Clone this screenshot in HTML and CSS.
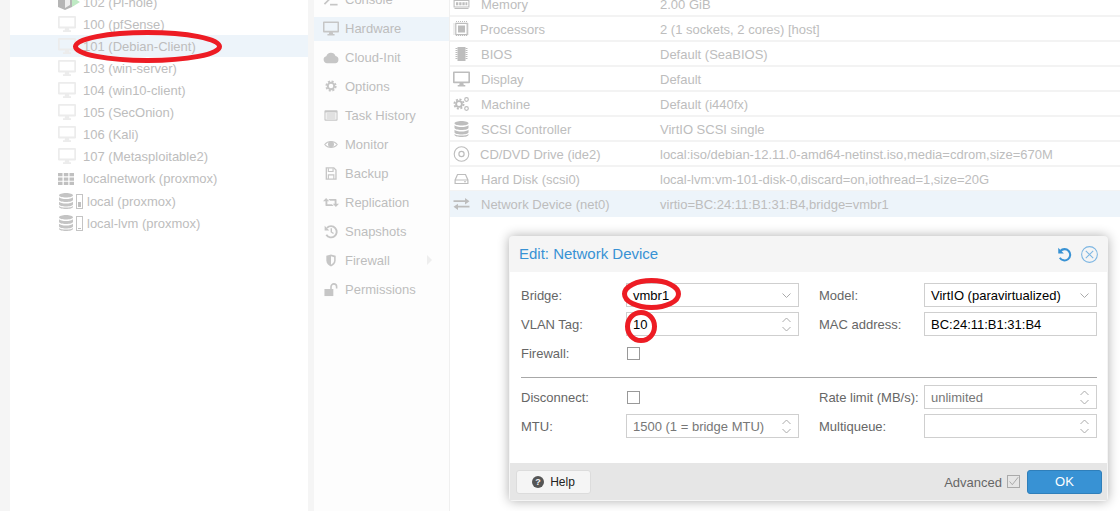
FILE: index.html
```html
<!DOCTYPE html>
<html lang="en">
<head>
<meta charset="utf-8">
<title>Edit: Network Device</title>
<link rel="stylesheet" href="styles.css">
</head>
<body>
<svg class="defs" width="0" height="0" aria-hidden="true">
  <symbol id="i-desktop" viewBox="0 0 18 16"><path fill="currentColor" fill-rule="evenodd" d="M1 0h16a1 1 0 0 1 1 1v10.500a1 1 0 0 1-1 1h-6l.4 1.800H13V16H5v-1.700h1.600l.4-1.800H1a1 1 0 0 1-1-1V1a1 1 0 0 1 1-1zM1.700 1.700v8.900h14.600V1.700z"/></symbol>
  <symbol id="i-db" viewBox="0 0 14 16"><path fill="currentColor" d="M7 0c3.800 0 7 1 7 2.300S10.800 4.600 7 4.600 0 3.600 0 2.300 3.200 0 7 0zM0 4.300c1 1.200 3.800 1.800 7 1.800s6-.6 7-1.800v2.400c0 1.300-3.200 2.300-7 2.300S0 8 0 6.700zM0 8.800c1 1.200 3.800 1.800 7 1.800s6-.6 7-1.800v2.400c0 1.300-3.200 2.300-7 2.300s-7-1-7-2.300zM0 13c1 1.100 3.800 1.600 7 1.600S13 14.100 14 13v.7c0 1.300-3.200 2.300-7 2.300s-7-1-7-2.300z"/></symbol>
  <symbol id="i-gear" viewBox="0 0 16 16"><circle cx="8" cy="8" r="4.300" fill="none" stroke="currentColor" stroke-width="2.600"/><circle cx="8" cy="8" r="6.300" fill="none" stroke="currentColor" stroke-width="2.400" stroke-dasharray="2.800 2.150"/></symbol>
  <symbol id="i-chev" viewBox="0 0 9 5"><path d="M.5 .5l4 4 4-4" fill="none" stroke="currentColor" stroke-width="1"/></symbol>
  <symbol id="i-spin" viewBox="0 0 9 15"><path d="M.5 5l4-4 4 4M.5 10l4 4 4-4" fill="none" stroke="currentColor" stroke-width="1"/></symbol>
</svg>

<div class="page">
  <nav class="tree">
    <div class="node"><svg class="ico-guest" viewBox="0 0 22 16"><path fill="#b5b5b5" d="M0 3l6-3 8 2v11l-7 3-7-3z"/><path fill="#eee" d="M7 5l5-2v8l-5 3z"/><path fill="#bfeac4" d="M14 3l8 5-8 5z"/></svg><span>102 (Pi-hole)</span></div>
    <div class="node"><svg class="ico-vm"><use href="#i-desktop"/></svg><span>100 (pfSense)</span></div>
    <div class="node is-sel"><svg class="ico-vm"><use href="#i-desktop"/></svg><span>101 (Debian-Client)</span></div>
    <div class="node"><svg class="ico-vm"><use href="#i-desktop"/></svg><span>103 (win-server)</span></div>
    <div class="node"><svg class="ico-vm"><use href="#i-desktop"/></svg><span>104 (win10-client)</span></div>
    <div class="node"><svg class="ico-vm"><use href="#i-desktop"/></svg><span>105 (SecOnion)</span></div>
    <div class="node"><svg class="ico-vm"><use href="#i-desktop"/></svg><span>106 (Kali)</span></div>
    <div class="node"><svg class="ico-vm"><use href="#i-desktop"/></svg><span>107 (Metasploitable2)</span></div>
    <div class="node node-tall"><svg class="ico-net" viewBox="0 0 16 12"><path fill="#c0c0c0" d="M0 0h4.500v3.300H0zM5.800 0h4.500v3.300H5.800zM11.500 0H16v3.300h-4.500zM0 4.400h4.500v3.300H0zM5.800 4.400h4.500v3.300H5.800zM11.500 4.400H16v3.300h-4.500zM0 8.700h4.500V12H0zM5.800 8.700h4.500V12H5.800zM11.500 8.700H16V12h-4.500z"/></svg><span>localnetwork (proxmox)</span></div>
    <div class="node node-store"><svg class="ico-db"><use href="#i-db"/></svg><span class="usage"><span class="usage-fill"></span></span><span>local (proxmox)</span></div>
    <div class="node node-store"><svg class="ico-db"><use href="#i-db"/></svg><span class="usage"><span class="usage-fill usage-low"></span></span><span>local-lvm (proxmox)</span></div>
  </nav>

  <nav class="menu">
    <div class="item"><svg class="ico-menu" viewBox="0 0 16 16"><path d="M1 2l5.500 5.500L1 13" fill="none" stroke="currentColor" stroke-width="1.800"/><path d="M7 13.500h8" stroke="currentColor" stroke-width="1.800"/></svg><span>Console</span></div>
    <div class="item is-sel"><svg class="ico-menu"><use href="#i-desktop"/></svg><span>Hardware</span></div>
    <div class="item"><svg class="ico-menu" viewBox="0 0 16 16"><path fill="currentColor" d="M3.800 14a3.700 3.700 0 0 1-.8-7.300A5.200 5.200 0 0 1 12.800 6.300 3.900 3.900 0 0 1 12.500 14z"/></svg><span>Cloud-Init</span></div>
    <div class="item"><svg class="ico-gear"><use href="#i-gear"/></svg><span>Options</span></div>
    <div class="item"><svg class="ico-menu" viewBox="0 0 16 16"><path fill="currentColor" fill-rule="evenodd" d="M2 2.500h12a1 1 0 0 1 1 1v9a1 1 0 0 1-1 1H2a1 1 0 0 1-1-1v-9a1 1 0 0 1 1-1zM2.200 4.800v7.500h11.600V4.800z"/><path fill="currentColor" d="M3.200 5.900h9.600V7H3.200zM3.200 8h9.600v1.100H3.200zM3.200 10h9.600v1.100H3.200z"/></svg><span>Task History</span></div>
    <div class="item"><svg class="ico-menu" viewBox="0 0 16 16"><path fill="none" stroke="currentColor" stroke-width="1.100" d="M1.300 8C4.700 3.600 11.300 3.600 14.700 8 11.300 12.400 4.700 12.400 1.300 8z"/><circle cx="8" cy="7.700" r="3.200" fill="currentColor"/></svg><span>Monitor</span></div>
    <div class="item"><svg class="ico-menu" viewBox="0 0 16 16"><path fill="none" stroke="currentColor" stroke-width="1.400" d="M3 2h8l2.300 2.300v9.700H3z"/><path fill="none" stroke="currentColor" stroke-width="1.200" d="M5.200 2.300v3.500h5V2.300M5.200 13.800V9.500h5.800v4.300"/></svg><span>Backup</span></div>
    <div class="item"><svg class="ico-menu" viewBox="0 0 18 16"><path fill="currentColor" d="M3.500 3L7 6.500H4.900V10H10l2 2H3.800a1 1 0 0 1-1-1V6.500H0zM14.500 13L11 9.500h2.100V6H8L6 4h8.200a1 1 0 0 1 1 1v4.500H18z"/></svg><span>Replication</span></div>
    <div class="item"><svg class="ico-menu" viewBox="0 0 16 16"><path fill="none" stroke="currentColor" stroke-width="2" d="M3.700 4.200A6 6 0 1 1 3 11.500"/><path fill="currentColor" d="M1.200 1.800l5 5h-5z"/><path fill="none" stroke="currentColor" stroke-width="1.500" d="M8.300 4.500v4l2.400 1.600"/></svg><span>Snapshots</span></div>
    <div class="item item-more"><svg class="ico-menu" viewBox="0 0 16 16"><path fill="currentColor" d="M8 1.500l5 1.500v5c0 3.100-2.400 5.200-5 6.500C5.400 13.200 3 11.100 3 8V3z"/><path fill="#fdfdfd" d="M8 3.500l3.300 1v3.600c0 2-1.500 3.400-3.300 4.400z"/></svg><span>Firewall</span><span class="caret"></span></div>
    <div class="item"><svg class="ico-menu" viewBox="0 0 16 16"><path fill="currentColor" d="M1 7.500h9.500v7.500H1z"/><path fill="none" stroke="currentColor" stroke-width="1.700" d="M8 7.500V5a3 3 0 0 1 6 0v2"/></svg><span>Permissions</span></div>
  </nav>

  <main class="grid">
    <div class="row"><svg class="ico-hw" viewBox="0 0 16 16"><path fill="none" stroke="currentColor" stroke-width="1.100" d="M.6 4.500h14.800v6.500H.6z"/><path fill="currentColor" d="M2.500 6.300h2.300v3H2.500zM5.700 6.300H8v3H5.700zM8.900 6.300h2.300v3H8.900zM12 6.300h1.800v3H12zM1 12h14v1H1z"/></svg><span class="key">Memory</span><span class="val">2.00 GiB</span></div>
    <div class="row"><svg class="ico-hw ico-cd" viewBox="0 0 16 16"><path fill="none" stroke="currentColor" stroke-width="1.200" d="M2.300 2.300h11.400v11.400H2.300z"/><path fill="currentColor" d="M4.500 4.500h7v7h-7z"/><path stroke="currentColor" stroke-width="1" stroke-dasharray="1 1" d="M0 3h2M0 5h2M0 7h2M0 9h2M0 11h2M0 13h2M14 3h2M14 5h2M14 7h2M14 9h2M14 11h2M14 13h2M3 0v2M5 0v2M7 0v2M9 0v2M11 0v2M13 0v2M3 14v2M5 14v2M7 14v2M9 14v2M11 14v2M13 14v2"/></svg><span class="key key-cpu">Processors</span><span class="val">2 (1 sockets, 2 cores) [host]</span></div>
    <div class="row"><svg class="ico-hw" viewBox="0 0 16 16"><path fill="currentColor" d="M4 1h8v14H4z"/><path stroke="currentColor" stroke-width="1" d="M2 2.500h2M2 4.500h2M2 6.500h2M2 8.500h2M2 10.500h2M2 12.500h2M12 2.500h2M12 4.500h2M12 6.500h2M12 8.500h2M12 10.500h2M12 12.500h2"/></svg><span class="key">BIOS</span><span class="val">Default (SeaBIOS)</span></div>
    <div class="row"><svg class="ico-hw"><use href="#i-desktop"/></svg><span class="key">Display</span><span class="val">Default</span></div>
    <div class="row"><svg class="ico-hw" viewBox="0 0 16 16"><circle cx="5.500" cy="8" r="2.900" fill="none" stroke="currentColor" stroke-width="1.900"/><circle cx="5.500" cy="8" r="4.600" fill="none" stroke="currentColor" stroke-width="1.800" stroke-dasharray="2 1.600"/><circle cx="13" cy="3.500" r="1.800" fill="none" stroke="currentColor" stroke-width="1.200"/><circle cx="13" cy="12.500" r="1.800" fill="none" stroke="currentColor" stroke-width="1.200"/></svg><span class="key">Machine</span><span class="val">Default (i440fx)</span></div>
    <div class="row"><svg class="ico-hw"><use href="#i-db"/></svg><span class="key">SCSI Controller</span><span class="val">VirtIO SCSI single</span></div>
    <div class="row"><svg class="ico-hw ico-cd" viewBox="0 0 16 16"><circle cx="8" cy="8" r="7.300" fill="none" stroke="currentColor" stroke-width="1.100"/><circle cx="8" cy="8" r="2.600" fill="none" stroke="currentColor" stroke-width="1.200"/></svg><span class="key key-cpu">CD/DVD Drive (ide2)</span><span class="val">local:iso/debian-12.11.0-amd64-netinst.iso,media=cdrom,size=670M</span></div>
    <div class="row"><svg class="ico-hw" viewBox="0 0 16 16"><path fill="none" stroke="currentColor" stroke-width="1.200" d="M1.600 9L4 3.500h8L14.400 9v3.500H1.600zM1.600 9h12.800"/><path fill="currentColor" d="M10.500 10.300h2v1h-2z"/></svg><span class="key">Hard Disk (scsi0)</span><span class="val">local-lvm:vm-101-disk-0,discard=on,iothread=1,size=20G</span></div>
    <div class="row is-sel"><svg class="ico-hw" viewBox="0 0 16 16"><path fill="currentColor" d="M0 4.300h11.500V2L16 5.200l-4.500 3.200V6H0zM16 9.800H4.500V7.700L0 10.800 4.500 14v-2.500H16z"/></svg><span class="key">Network Device (net0)</span><span class="val">virtio=BC:24:11:B1:31:B4,bridge=vmbr1</span></div>
  </main>
</div>

<section class="modal">
  <header class="modal-head">
    <h2 class="modal-title">Edit: Network Device</h2>
    <svg class="tool-undo" viewBox="0 0 16 16"><path fill="none" stroke="currentColor" stroke-width="2.200" d="M3.600 4.300A6 6 0 1 1 3 11.500"/><path fill="currentColor" d="M1.300 .8l6 6h-6z"/></svg>
    <svg class="tool-close" viewBox="0 0 16 16"><circle cx="8" cy="8" r="7.400" fill="none" stroke="currentColor" stroke-width="1"/><path d="M4.500 4.500l7 7M11.500 4.500l-7 7" stroke="currentColor" stroke-width="1"/></svg>
  </header>
  <div class="modal-body">
    <div class="form-top">
      <div class="col">
        <div class="field"><label>Bridge:</label><div class="input"><span>vmbr1</span><svg class="chev"><use href="#i-chev"/></svg></div></div>
        <div class="field"><label>VLAN Tag:</label><div class="input"><span>10</span><svg class="spin"><use href="#i-spin"/></svg></div></div>
        <div class="field"><label>Firewall:</label><span class="check"></span></div>
      </div>
      <div class="col">
        <div class="field"><label>Model:</label><div class="input"><span>VirtIO (paravirtualized)</span><svg class="chev"><use href="#i-chev"/></svg></div></div>
        <div class="field"><label>MAC address:</label><div class="input"><span>BC:24:11:B1:31:B4</span></div></div>
      </div>
    </div>
    <hr class="rule">
    <div class="form-top">
      <div class="col">
        <div class="field"><label>Disconnect:</label><span class="check"></span></div>
        <div class="field"><label>MTU:</label><div class="input is-empty"><span>1500 (1 = bridge MTU)</span><svg class="spin"><use href="#i-spin"/></svg></div></div>
      </div>
      <div class="col">
        <div class="field"><label>Rate limit (MB/s):</label><div class="input is-empty"><span>unlimited</span><svg class="spin"><use href="#i-spin"/></svg></div></div>
        <div class="field"><label>Multiqueue:</label><div class="input is-empty"><span></span><svg class="spin"><use href="#i-spin"/></svg></div></div>
      </div>
    </div>
  </div>
  <footer class="modal-foot">
    <button class="btn-help" type="button"><svg class="help-ico" viewBox="0 0 16 16"><circle cx="8" cy="8" r="8" fill="currentColor"/><text x="8" y="12.500" class="help-q">?</text></svg><span>Help</span></button>
    <span class="adv">Advanced</span>
    <span class="adv-check"><svg viewBox="0 0 14 14"><path d="M2 7l3.500 4L13 1.500" fill="none" stroke="#9a9a9a" stroke-width="1"/></svg></span>
    <button class="btn-ok" type="button">OK</button>
  </footer>
</section>

<svg class="marks" viewBox="0 0 1120 511" aria-hidden="true">
  <ellipse cx="147.500" cy="46.500" rx="72" ry="14"/>
  <ellipse cx="651.500" cy="294" rx="27" ry="13.500"/>
  <ellipse cx="641" cy="326.500" rx="13.500" ry="14"/>
</svg>
</body>
</html>
```
FILE: styles.css
```css
* { box-sizing: border-box; }
html, body { margin: 0; height: 100%; overflow: hidden; }
body { font-family: "Liberation Sans", Arial, sans-serif; font-size: 13px; background: #f5f5f5; position: relative; }
.defs { position: absolute; }
svg { display: block; flex: none; }

.page { display: flex; height: 511px; overflow: hidden; }

.tree { width: 298px; margin-left: 10px; background: #fff; color: #bdbdbd; flex: none; }
.node { display: flex; align-items: center; height: 22px; padding-left: 48px; }
.node:first-child { margin-top: -9px; }
.node.is-sel { background: #edf4fa; }
.node-tall { height: 23px; }
.ico-vm { width: 18px; height: 16px; color: #ececec; margin-right: 7px; }
.ico-guest { width: 22px; height: 16px; margin-right: 3px; }
.ico-net { width: 16px; height: 12px; margin-right: 9px; }
.ico-db { width: 14px; height: 16px; color: #c4c4c4; margin: 0 3px 0 1px; }
.usage { width: 7px; height: 15px; border: 1px solid #c4c4c4; margin-right: 4px; display: flex; align-items: flex-end; padding: 1px; }
.usage-fill { width: 100%; height: 5px; background: #c0c0c0; }
.usage-low { height: 1px; }

.menu { width: 135px; margin-left: 6px; background: #fdfdfd; color: #bdbdbd; flex: none; display: flex; flex-direction: column; gap: 5px; margin-top: -12px; height: 523px; }
.item { display: flex; align-items: center; height: 24px; padding: 0 0 2px 9px; position: relative; }
.item.is-sel { background: #edf4fa; }
.ico-menu { width: 16px; height: 15px; color: #c6c6c6; margin-right: 6px; }
.ico-gear { width: 12px; height: 12px; color: #c6c6c6; margin: 0 8px 0 2px; }
.caret { position: absolute; left: 113px; top: 6px; border-left: 5px solid #eee; border-top: 5px solid transparent; border-bottom: 5px solid transparent; }

.grid { flex: 1; background: #fff; border-left: 1px solid #f0f0f0; margin-top: -8px; height: 519px; color: #bdbdbd; }
.row { display: flex; align-items: center; height: 25px; border-bottom: 2px solid #f3f3f3; padding: 1px 0 0 3px; }
.row.is-sel { background: #edf4fa; border-bottom: 0; height: 26px; margin-top: -1px; padding-top: 0; }
.ico-hw { width: 17px; height: 16px; color: #bdbdbd; margin-right: 11px; }
.ico-cd { margin-right: 10px; }
.key { width: 179px; }
.key-cpu { width: 180px; }

.modal { position: absolute; left: 509px; top: 236px; width: 599px; height: 265px; background: #f5f5f5; border-radius: 4px; box-shadow: 0 0 12px rgba(0,0,0,.32); display: flex; flex-direction: column; padding: 0 1px 1px; }
.modal-head { height: 36px; display: flex; align-items: center; padding: 0 9px; color: #3892d4; flex: none; }
.modal-title { margin: 0 0 2px; font-size: 15px; font-weight: 400; flex: 1; }
.tool-undo { width: 15px; height: 15px; margin-right: 9px; color: #3892d4; }
.tool-close { width: 17px; height: 17px; color: #7db6e2; }
.modal-body { flex: 1; background: #fff; padding: 11px 10px 0 11px; }
.form-top { display: grid; grid-template-columns: 278px 278px; column-gap: 20px; }
.col { display: flex; flex-direction: column; gap: 5px; }
.field { display: flex; align-items: center; height: 24px; }
.field label { width: 105px; color: #666; flex: none; padding-top: 1px; }
.input { flex: 1; height: 24px; border: 1px solid #cfcfcf; display: flex; align-items: center; padding: 0 7px 0 6px; color: #000; justify-content: space-between; }
.input.is-empty { color: #777; }
.chev { width: 9px; height: 5px; color: #aaa; }
.spin { width: 9px; height: 15px; color: #aaa; }
.check { width: 13px; height: 13px; border: 1px solid #999; margin-left: 1px; }
.rule { border: 0; border-top: 1px solid #a8a8a8; margin: 12px 0 7px; height: 0; }

.modal-foot { height: 37px; flex: none; background: #e6e6e6; display: flex; align-items: center; padding: 0 5px 0 6px; }
.btn-help { width: 75px; height: 24px; background: #f5f5f5; border: 1px solid #dcdcdc; border-radius: 3px; display: flex; align-items: center; justify-content: center; gap: 6px; padding: 0; font: inherit; font-size: 12px; color: #222; margin-right: auto; }
.help-ico { width: 12px; height: 12px; color: #555; }
.help-q { fill: #f5f5f5; font-size: 12px; font-weight: 700; text-anchor: middle; font-family: "Liberation Sans", Arial, sans-serif; }
.adv { color: #666; margin-right: 5px; padding-top: 1px; }
.adv-check { width: 13px; height: 13px; border: 1px solid #aaa; margin-right: 7px; }
.btn-ok { width: 75px; height: 24px; background: #3892d4; border: 1px solid #2f7fba; border-radius: 3px; color: #fff; font: inherit; padding: 0; }

.marks { position: absolute; left: 0; top: 0; width: 1120px; height: 511px; pointer-events: none; }
.marks ellipse { fill: none; stroke: #ed1c24; stroke-width: 5; }
```
